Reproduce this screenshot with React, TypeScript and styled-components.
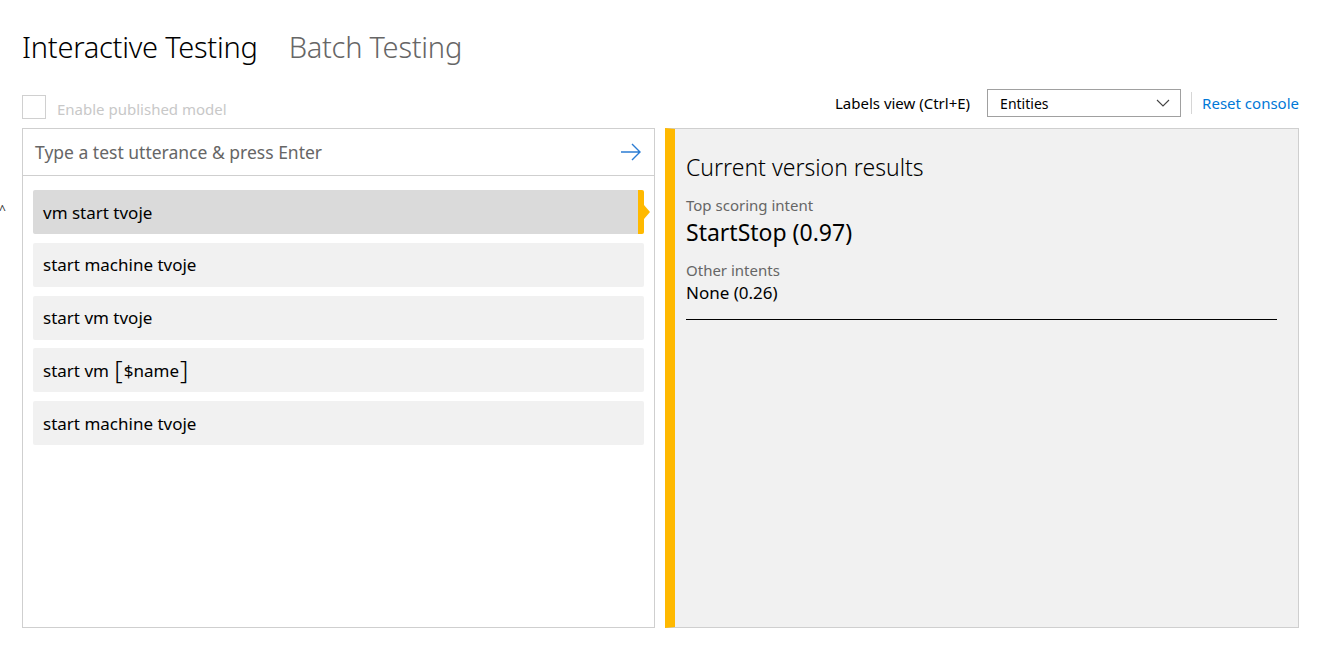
import React from "react";
import styled, { createGlobalStyle } from "styled-components";

const Global = createGlobalStyle`
  html, body { margin: 0; padding: 0; background: #fff; }
  body { font-family: "Noto Sans", "Open Sans", sans-serif; color: #000; }
  * { box-sizing: border-box; }
`;

const Page = styled.div`
  width: 1338px;
  height: 659px;
  padding: 26px 39px 0 22px;
  position: relative;
  overflow: hidden;
`;

const Tabs = styled.div`
  display: flex;
  gap: 31px;
  height: 40px;
  align-items: center;
`;

const Tab = styled.div<{ $active?: boolean }>`
  font-size: 29px;
  font-weight: 300;
  letter-spacing: -0.25px;
  color: ${(p) => (p.$active ? "#000" : "#666")};
`;

const Toolbar = styled.div`
  display: flex;
  align-items: center;
  margin-top: 22px;
  height: 30px;
`;

const CheckRow = styled.label`
  display: flex;
  align-items: center;
  gap: 11px;
  margin-top: 8px;
  flex: 1;
`;

const Box = styled.span`
  width: 24px;
  height: 24px;
  border: 1px solid #d0d0d0;
  background: #fff;
`;

const Muted = styled.span`
  font-size: 15px;
  color: #c8c8c8;
  padding-top: 4px;
`;

const LabelsText = styled.span`
  font-size: 15px;
  margin-right: 17px;
`;

const Select = styled.div`
  width: 194px;
  height: 28px;
  border: 1px solid #a0a0a0;
  display: flex;
  align-items: center;
  justify-content: space-between;
  padding: 0 10px 0 12px;
  font-size: 14px;
`;

const Sep = styled.span`
  width: 1px;
  height: 22px;
  background: #d6d6d6;
  margin: 0 10px;
`;

const Link = styled.a`
  font-size: 15px;
  color: #0078d7;
  text-decoration: none;
`;

const Panels = styled.div`
  display: flex;
  gap: 10px;
  margin-top: 10px;
  height: 500px;
`;

const LeftPanel = styled.div`
  width: 633px;
  border: 1px solid #cfcfcf;
  display: flex;
  flex-direction: column;
`;

const InputRow = styled.div`
  height: 47px;
  border-bottom: 1px solid #cfcfcf;
  display: flex;
  align-items: center;
  justify-content: space-between;
  padding: 0 12px 0 12px;
`;

const Placeholder = styled.span`
  font-size: 17.5px;
  color: #666;
`;

const List = styled.div`
  display: flex;
  flex-direction: column;
  gap: 8.75px;
  padding: 14px 10px 0 10px;
`;

const Item = styled.div<{ $selected?: boolean }>`
  position: relative;
  height: 44px;
  border-radius: 2px;
  background: ${(p) => (p.$selected ? "#dadada" : "#f1f1f1")};
  display: flex;
  align-items: center;
  padding-left: 10px;
  font-size: 17px;
  ${(p) => (p.$selected ? "border-right: 6px solid #ffb900;" : "")}
`;

const Pointer = styled.span`
  position: absolute;
  right: -12px;
  top: 15px;
  width: 0;
  height: 0;
  border-top: 7px solid transparent;
  border-bottom: 7px solid transparent;
  border-left: 6px solid #ffb900;
`;

const Bracket = styled.span`
  font-size: 26px;
  font-weight: 300;
  line-height: 1;
  margin: 0 1px;
  position: relative;
  top: -1px;
`;

const RightPanel = styled.div`
  flex: 1;
  background: #f1f1f1;
  border: 1px solid #cfcfcf;
  border-left: 10px solid #ffb900;
  padding: 22px 21px 0 11px;
`;

const ResultsTitle = styled.div`
  font-size: 23px;
  font-weight: 300;
  line-height: 32px;
`;

const Caption = styled.div<{ $top: number }>`
  font-size: 15px;
  color: #666;
  margin-top: ${(p) => p.$top}px;
  line-height: 20px;
`;

const Big = styled.div`
  font-size: 23px;
  line-height: 34px;
`;

const Normal = styled.div`
  font-size: 17px;
  line-height: 26px;
`;

const Rule = styled.div`
  height: 1px;
  background: #000;
  margin-top: 13px;
`;

const EdgeMark = styled.span`
  position: absolute;
  left: -1px;
  top: 201px;
  font-size: 12px;
  color: #333;
`;

const items = [
  "vm start tvoje",
  "start machine tvoje",
  "start vm tvoje",
  "ENTITY",
  "start machine tvoje",
];

export default function App() {
  return (
    <>
      <Global />
      <Page>
        <EdgeMark>^</EdgeMark>
        <Tabs>
          <Tab $active>Interactive Testing</Tab>
          <Tab>Batch Testing</Tab>
        </Tabs>
        <Toolbar>
          <CheckRow>
            <Box />
            <Muted>Enable published model</Muted>
          </CheckRow>
          <LabelsText>Labels view (Ctrl+E)</LabelsText>
          <Select>
            <span>Entities</span>
            <svg width="14" height="8" viewBox="0 0 14 8">
              <path d="M1 1 L7 7 L13 1" fill="none" stroke="#444" strokeWidth="1.1" />
            </svg>
          </Select>
          <Sep />
          <Link href="#">Reset console</Link>
        </Toolbar>
        <Panels>
          <LeftPanel>
            <InputRow>
              <Placeholder>Type a test utterance &amp; press Enter</Placeholder>
              <svg width="22" height="18" viewBox="0 0 22 18">
                <path d="M1 9 H20 M12 1 L20 9 L12 17" fill="none" stroke="#2b7cd3" strokeWidth="1.4" />
              </svg>
            </InputRow>
            <List>
              {items.map((t, i) => (
                <Item key={i} $selected={i === 0}>
                  {t === "ENTITY" ? (
                    <>
                      start vm&nbsp;<Bracket>[</Bracket>$name<Bracket>]</Bracket>
                    </>
                  ) : (
                    t
                  )}
                  {i === 0 && <Pointer />}
                </Item>
              ))}
            </List>
          </LeftPanel>
          <RightPanel>
            <ResultsTitle>Current version results</ResultsTitle>
            <Caption $top={12}>Top scoring intent</Caption>
            <Big>StartStop (0.97)</Big>
            <Caption $top={11}>Other intents</Caption>
            <Normal>None (0.26)</Normal>
            <Rule />
          </RightPanel>
        </Panels>
      </Page>
    </>
  );
}
